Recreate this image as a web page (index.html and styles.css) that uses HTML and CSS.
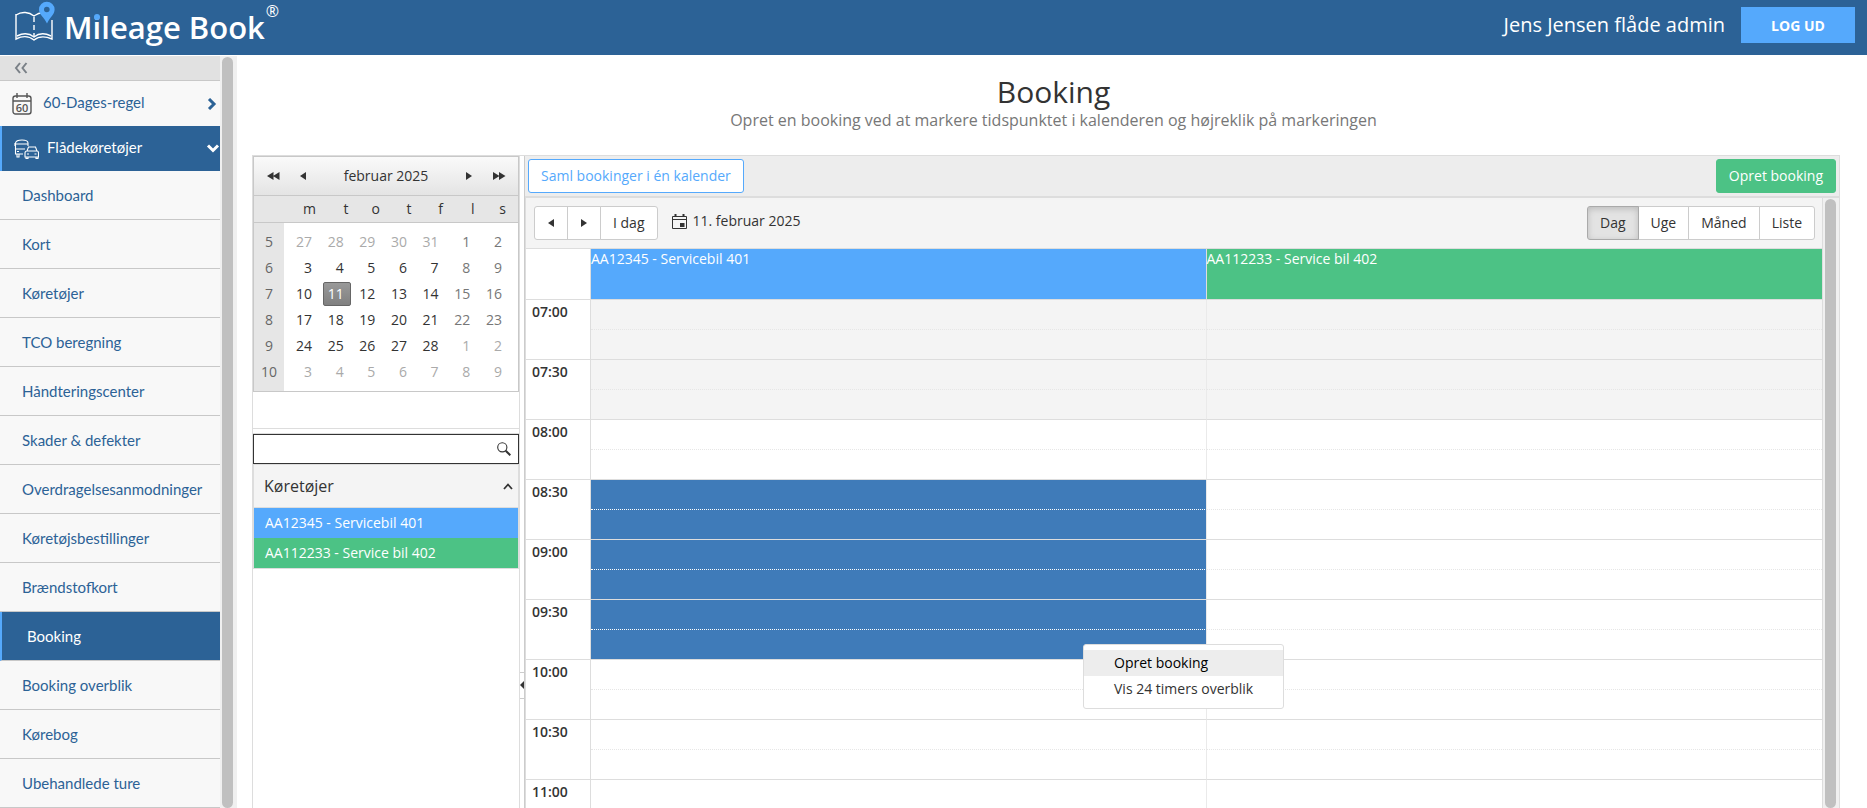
FILE: index.html
```html
<!DOCTYPE html>
<html lang="da">
<head>
<meta charset="utf-8">
<title>Mileage Book - Booking</title>
<link rel="stylesheet" href="styles.css">
</head>
<body>
<div class="app">
  <header class="topbar">
    <a class="logo" href="#">
      <svg class="logo-icon" viewBox="0 0 42 44" width="42" height="44" fill="none" aria-hidden="true">
        <path d="M2 14v25c6-3 13-3 18 1 5-4 11-4 18-1V20" stroke="#fff" stroke-width="1.4"/>
        <path d="M2 15c6-4 13-3 18 1 2-1 4-3 7-3M3 36c6-3 12-3 17 1 5-4 11-4 17-1" stroke="#fff" stroke-width="1.4"/>
        <path d="M20 17v19" stroke="#fff" stroke-width="1.4" stroke-dasharray="5 3"/>
        <path d="M33 23.500C30 17 25 14.500 25 9.500a7.800 7.800 0 0 1 15.600 0C40.600 14.500 36 17 33 23.500Z" fill="#55a9fc"/>
        <circle cx="32.800" cy="9.500" r="2.800" fill="#2c6296"/>
      </svg>
      <span class="logo-name">M<span class="logo-i">i</span>leage Book</span><span class="logo-mark">®</span>
    </a>
    <div class="user">
      <span>Jens Jensen flåde admin</span>
      <button class="logout" type="button">LOG UD</button>
    </div>
  </header>

  <div class="body">
    <nav class="sidebar">
      <div class="menu">
        <button class="collapse" type="button" aria-label="Skjul menu">
          <svg width="14" height="12" viewBox="0 0 14 12" fill="none" stroke="#7a8087" stroke-width="2" aria-hidden="true"><path d="M6 1 2 6l4 5M12.500 1l-4 5 4 5"/></svg>
        </button>
        <a class="group" href="#">
          <svg width="20" height="22" viewBox="0 0 20 22" aria-hidden="true">
            <rect x="1" y="3" width="18" height="18" rx="2.500" fill="none" stroke="#555" stroke-width="1.400"/>
            <path d="M1 8h18M5 0v5M15 0v5" stroke="#555" stroke-width="1.400"/>
            <text class="icon-digits" x="10" y="18.500" text-anchor="middle">60</text>
          </svg>
          <span class="group-name">60-Dages-regel</span>
          <svg width="10" height="12" viewBox="0 0 10 12" fill="none" stroke="#2c6296" stroke-width="3" aria-hidden="true"><path d="m2 1 5 5-5 5"/></svg>
        </a>
        <a class="group open" href="#">
          <svg width="25" height="20" viewBox="0 0 25 20" fill="none" stroke="#fff" stroke-width="1.100" aria-hidden="true">
            <path d="M9 15H1.500V4Q2 1 8 1t6 3v3M2 5h12M2 10h9M0 4v3M3 15v3h2v-3M3 12.500h2"/>
            <path d="M11 18v-4q0-2 2-2l1.500-4h7l1.500 4q1.500 0 1.500 2v4ZM13 12h10M12 18v1.500h2V18M22 18v1.500h2V18M13 15h2M20.500 15h2"/>
          </svg>
          <span class="group-name">Flådekøretøjer</span>
          <svg width="14" height="10" viewBox="0 0 14 10" fill="none" stroke="#fff" stroke-width="3" aria-hidden="true"><path d="m2 1.500 5 5 5-5"/></svg>
        </a>
        <a class="item" href="#">Dashboard</a>
        <a class="item" href="#">Kort</a>
        <a class="item" href="#">Køretøjer</a>
        <a class="item" href="#">TCO beregning</a>
        <a class="item" href="#">Håndteringscenter</a>
        <a class="item" href="#">Skader &amp; defekter</a>
        <a class="item" href="#">Overdragelsesanmodninger</a>
        <a class="item" href="#">Køretøjsbestillinger</a>
        <a class="item" href="#">Brændstofkort</a>
        <a class="item current" href="#">Booking</a>
        <a class="item" href="#">Booking overblik</a>
        <a class="item" href="#">Kørebog</a>
        <a class="item" href="#">Ubehandlede ture</a>
      </div>
      <div class="scrollbar"><div class="thumb"></div></div>
    </nav>

    <main class="main">
      <h1 class="title">Booking</h1>
      <p class="subtitle">Opret en booking ved at markere tidspunktet i kalenderen og højreklik på markeringen</p>

      <div class="workspace">
        <aside class="left">
          <div class="calendar-pane">
            <div class="calendar">
              <div class="calendar-head">
                <button type="button" aria-label="Forrige år"><svg width="13" height="8" viewBox="0 0 13 8" aria-hidden="true"><path d="M6.500 0v8L0 4ZM12.500 0v8L6 4Z"/></svg></button>
                <button type="button" aria-label="Forrige måned"><svg width="6" height="8" viewBox="0 0 6 8" aria-hidden="true"><path d="M6 0v8L0 4Z"/></svg></button>
                <span class="month">februar 2025</span>
                <button type="button" aria-label="Næste måned"><svg width="6" height="8" viewBox="0 0 6 8" aria-hidden="true"><path d="M0 0v8l6-4Z"/></svg></button>
                <button type="button" aria-label="Næste år"><svg width="13" height="8" viewBox="0 0 13 8" aria-hidden="true"><path d="M0 0v8l6.500-4ZM6 0v8l6.500-4Z"/></svg></button>
              </div>
              <table class="weekdays">
                <tr><th class="week"></th><th class="first">m</th><th>t</th><th>o</th><th>t</th><th>f</th><th>l</th><th>s</th></tr>
              </table>
              <div class="days-wrap">
              <table class="days">
                <tr><th class="week">5</th><td class="first other">27</td><td class="other">28</td><td class="other">29</td><td class="other">30</td><td class="other">31</td><td class="weekend">1</td><td class="weekend">2</td></tr>
                <tr><th class="week">6</th><td class="first">3</td><td>4</td><td>5</td><td>6</td><td>7</td><td class="weekend">8</td><td class="weekend">9</td></tr>
                <tr><th class="week">7</th><td class="first">10</td><td class="chosen"><span>11</span></td><td>12</td><td>13</td><td>14</td><td class="weekend">15</td><td class="weekend">16</td></tr>
                <tr><th class="week">8</th><td class="first">17</td><td>18</td><td>19</td><td>20</td><td>21</td><td class="weekend">22</td><td class="weekend">23</td></tr>
                <tr><th class="week">9</th><td class="first">24</td><td>25</td><td>26</td><td>27</td><td>28</td><td class="other">1</td><td class="other">2</td></tr>
                <tr><th class="week">10</th><td class="first other">3</td><td class="other">4</td><td class="other">5</td><td class="other">6</td><td class="other">7</td><td class="other">8</td><td class="other">9</td></tr>
              </table>
              </div>
            </div>
          </div>
          <div class="vehicles-pane">
            <div class="search">
              <input type="text" aria-label="Søg køretøj">
              <svg width="14" height="14" viewBox="0 0 14 14" fill="none" aria-hidden="true"><circle cx="5.300" cy="5.300" r="4.600" stroke="#333" stroke-width="1.100"/><path d="m8.700 8.700 4.600 4.600" stroke="#333" stroke-width="2"/></svg>
            </div>
            <div class="vehicles">
              <div class="vehicles-head">Køretøjer
                <svg width="10" height="7" viewBox="0 0 10 7" fill="none" stroke="#333" stroke-width="1.800" aria-hidden="true"><path d="m1 6 4-4.500L9 6"/></svg>
              </div>
              <div class="vehicle blue">AA12345 - Servicebil 401</div>
              <div class="vehicle green">AA112233 - Service bil 402</div>
            </div>
          </div>
        </aside>

        <div class="splitter">
          <button type="button" aria-label="Skjul panel"><svg width="4" height="8" viewBox="0 0 4 8" aria-hidden="true"><path d="M4 0v8L0 4Z"/></svg></button>
        </div>

        <section class="right">
          <div class="actions">
            <button class="btn outline" type="button">Saml bookinger i én kalender</button>
            <button class="btn create" type="button">Opret booking</button>
          </div>
          <div class="scroller">
            <div class="scheduler">
              <div class="tools">
                <div class="buttons">
                  <button class="arrow" type="button" aria-label="Forrige"><svg width="6" height="8" viewBox="0 0 6 8" aria-hidden="true"><path d="M6 0v8L0 4Z"/></svg></button>
                  <button class="arrow" type="button" aria-label="Næste"><svg width="6" height="8" viewBox="0 0 6 8" aria-hidden="true"><path d="M0 0v8l6-4Z"/></svg></button>
                  <button type="button">I dag</button>
                </div>
                <a class="date" href="#">
                  <svg width="15" height="15" viewBox="0 0 15 15" fill="none" stroke="#333" aria-hidden="true"><path d="M.500 2.500h14v12H.500ZM.500 5.500h14"/><path d="M3.500 0v3M11.500 0v3" stroke-width="2"/><path d="M8 9h4.500v4H8Z" fill="#333" stroke="none"/></svg>
                  11. februar 2025
                </a>
                <div class="buttons views">
                  <button class="active" type="button">Dag</button>
                  <button type="button">Uge</button>
                  <button type="button">Måned</button>
                  <button type="button">Liste</button>
                </div>
              </div>
              <table class="slots">
                <tr class="resources"><th class="time"></th><th class="blue">AA12345 - Servicebil 401</th><th class="green">AA112233 - Service bil 402</th></tr>
                <tr class="half off"><th class="time" rowspan="2">07:00</th><td></td><td></td></tr>
                <tr class="full off"><td></td><td></td></tr>
                <tr class="half off"><th class="time" rowspan="2">07:30</th><td></td><td></td></tr>
                <tr class="full off"><td></td><td></td></tr>
                <tr class="half"><th class="time" rowspan="2">08:00</th><td></td><td></td></tr>
                <tr class="full"><td></td><td></td></tr>
                <tr class="half"><th class="time" rowspan="2">08:30</th><td class="picked"></td><td></td></tr>
                <tr class="full"><td class="picked"></td><td></td></tr>
                <tr class="half"><th class="time" rowspan="2">09:00</th><td class="picked"></td><td></td></tr>
                <tr class="full"><td class="picked"></td><td></td></tr>
                <tr class="half"><th class="time" rowspan="2">09:30</th><td class="picked"></td><td></td></tr>
                <tr class="full"><td class="picked"></td><td></td></tr>
                <tr class="half"><th class="time" rowspan="2">10:00</th><td></td><td></td></tr>
                <tr class="full"><td></td><td></td></tr>
                <tr class="half"><th class="time" rowspan="2">10:30</th><td></td><td></td></tr>
                <tr class="full"><td></td><td></td></tr>
                <tr class="half"><th class="time" rowspan="2">11:00</th><td></td><td></td></tr>
                <tr class="full"><td></td><td></td></tr>
              </table>
            </div>
            <div class="scrollbar"><div class="thumb"></div></div>
          </div>
        </section>
      </div>
    </main>
  </div>

  <div class="context-menu" role="menu">
    <button class="hover" type="button" role="menuitem">Opret booking</button>
    <button type="button" role="menuitem">Vis 24 timers overblik</button>
  </div>
</div>
</body>
</html>
```
FILE: styles.css
```css
* { box-sizing: border-box; }

body {
  margin: 0;
  font: 14px/20px "Open Sans", "Noto Sans", sans-serif;
  color: #333;
  background: #fff;
}

button, input { font: inherit; color: inherit; }
button { cursor: pointer; }
a { text-decoration: none; color: inherit; }
svg { display: block; flex: none; }

table { border-collapse: separate; border-spacing: 0; table-layout: fixed; }
th, td { padding: 0; font-weight: 400; }

.app {
  height: 100vh;
  display: flex;
  flex-direction: column;
  overflow: hidden;
  position: relative;
}

/* Top bar */
.topbar {
  flex: none;
  height: 55px;
  padding-right: 12px;
  padding-left: 14px;
  display: flex;
  justify-content: space-between;
  background: #2c6296;
  color: #fff;
}
.logo { display: flex; gap: 8px; }
.logo-name {
  font: 600 31px/54px "Open Sans", sans-serif;
}
.logo-i { position: relative; }
.logo-i::after {
  content: "";
  position: absolute;
  left: 1px;
  top: 8px;
  width: 6px;
  height: 6px;
  border-radius: 50%;
  background: #55a9fc;
}
.logo-mark { margin-left: -7px; font: 16px/22px "Open Sans", sans-serif; }
.user {
  display: flex;
  gap: 16px;
  padding-top: 7px;
  font-size: 20px;
  line-height: 36px;
}
.logout {
  width: 114px;
  height: 36px;
  border: 0;
  background: #55a9fc;
  color: #fff;
  font: 700 14px/36px "Open Sans", sans-serif;
}

.body { flex: 1; min-height: 0; display: flex; }

/* Side menu */
.sidebar { flex: none; display: flex; overflow: hidden; padding-top: 1px; }
.menu {
  width: 220px;
  background: #f8f8f8;
  font-family: Lato, sans-serif;
  font-size: 15px;
  color: #2c6296;
}
.collapse {
  display: flex;
  align-items: center;
  width: 100%;
  height: 25px;
  padding: 0 14px;
  border: 0;
  border-bottom: 1px solid #c8c8c8;
  background: #e1e1e1;
}
.group {
  display: flex;
  align-items: center;
  gap: 11px;
  height: 45px;
  padding: 0 3px 0 12px;
}
.group.open {
  gap: 8px;
  padding: 0 0 0 12px;
  border-left: 2px solid #55a9fc;
  background: #2c6296;
  color: #fff;
}
.group-name { flex: 1; padding-bottom: 4px; }
.icon-digits { font: 600 11px "Open Sans", sans-serif; fill: #555; }
.item {
  display: block;
  height: 49px;
  padding: 0 22px;
  border-bottom: 1px solid #c8c8c8;
  line-height: 48px;
  white-space: nowrap;
}
.item.current {
  padding-left: 25px;
  border-left: 2px solid #55a9fc;
  background: #2c6296;
  color: #fff;
}
.scrollbar { flex: none; width: 17px; padding: 1px 4px 0 2px; background: #f0f0f0; }
.thumb { height: 100%; border-radius: 6px; background: #c0c0c0; }

/* Page */
.main {
  flex: 1;
  min-width: 0;
  display: flex;
  flex-direction: column;
  padding: 18px 27px 0 15px;
}
.title { margin: 0; padding-left: 15px; font-size: 30px; line-height: 38px; font-weight: 400; text-align: center; }
.subtitle { margin: 0 0 26px; padding-left: 15px; font-size: 16px; line-height: 18px; text-align: center; color: #777; }

.workspace {
  flex: 1;
  min-height: 0;
  display: flex;
  border: 1px solid #ddd;
  border-bottom: 0;
}
.left {
  flex: none;
  width: 267px;
  display: flex;
  flex-direction: column;
  border-right: 1px solid #ddd;
}
.calendar-pane { height: 273px; border-bottom: 1px solid #ddd; }

.calendar { border: 1px solid #c8c8c8; }
.calendar-head {
  display: flex;
  align-items: center;
  height: 39px;
  padding: 0 4px;
  border-bottom: 1px solid #c8c8c8;
  background: linear-gradient(#fafafa, #e4e4e4);
}
.calendar-head button {
  display: flex;
  justify-content: center;
  align-items: center;
  width: 30px;
  height: 30px;
  padding: 0;
  border: 0;
  background: none;
  fill: #333;
}
.month { flex: 1; text-align: center; }
.weekdays {
  width: 100%;
  padding-right: 11px;
  border-bottom: 1px solid #c8c8c8;
  background: #e6e6e6;
}
.weekdays th { height: 26px; padding-right: 1px; text-align: right; }
.weekdays .first { width: 34px; padding-right: 2px; }
.calendar .week { width: 30px; padding: 0; text-align: center; color: #666; background: #e6e6e6; }
.days-wrap { padding: 0 9px 0 0; background: linear-gradient(to right, #e6e6e6 30px, #fff 30px); }
.days { width: 100%; padding: 6px 0; }
.days td { height: 26px; padding: 0 7px 0 0; text-align: right; }
.days .first { width: 35px; }
.days .other { color: #aaa; }
.days .weekend { color: #777; }
.days .chosen { padding: 1px 0 1px 4px; }
.days .chosen span {
  display: block;
  padding: 0 6px 0 0;
  border: 1px solid #666;
  border-radius: 2px;
  background: linear-gradient(#999, #808080);
  color: #fff;
  line-height: 22px;
}

.vehicles-pane { margin-top: 4px; border-top: 1px solid #ddd; }
.search {
  display: flex;
  align-items: center;
  height: 30px;
  padding-right: 7px;
  border: 1px solid #333;
}
.search input { flex: 1; min-width: 0; height: 28px; border: 0; padding: 0 8px; outline: none; background: none; }
.vehicles { border: 1px solid #ddd; }
.vehicles-head {
  display: flex;
  align-items: center;
  justify-content: space-between;
  height: 43px;
  padding: 0 5px 0 10px;
  border-bottom: 1px solid #ddd;
  background: #f4f4f4;
  font-size: 16px;
}
.vehicle { padding: 0 11px; line-height: 30px; color: #fff; }
.blue { background: #55a9fc; }
.green { background: #4cc285; }

.splitter {
  flex: none;
  width: 4px;
  display: flex;
  flex-direction: column;
  justify-content: center;
  padding-top: 406px;
}
.splitter button {
  display: flex;
  align-items: center;
  height: 27px;
  padding: 0;
  border: solid #ccc;
  border-width: 1px 0;
  background: #fff;
  fill: #333;
}

/* Scheduler */
.right { flex: 1; min-width: 0; display: flex; flex-direction: column; border-left: 1px solid #ccc; }
.actions {
  flex: none;
  display: flex;
  justify-content: space-between;
  height: 42px;
  padding: 3px;
  border-bottom: 2px solid #ddd;
  background: #ededed;
}
.btn { height: 34px; padding: 0 12px; border: 1px solid #55a9fc; border-radius: 3px; }
.outline { background: #fff; color: #55a9fc; }
.create { border-color: #4cc285; background: #4cc285; color: #fff; }

.scroller { flex: 1; min-height: 0; display: flex; overflow: hidden; }
.scroller .scrollbar { width: 16px; padding-right: 3px; }
.scheduler { flex: 1; min-width: 0; border: solid #ddd; border-width: 0 1px; }
.tools {
  display: flex;
  height: 51px;
  padding: 8px 7px 8px 8px;
  border-bottom: 1px solid #ddd;
  background: #f4f4f4;
}
.buttons { display: flex; height: 34px; }
.buttons button {
  margin-left: -1px;
  padding: 0 12px;
  border: 1px solid #ccc;
  background: #fff;
}
.buttons button:first-child { margin-left: 0; border-radius: 3px 0 0 3px; }
.buttons button:last-child { border-radius: 0 3px 3px 0; }
.buttons .arrow { display: flex; justify-content: center; align-items: center; width: 34px; fill: #333; }
.buttons .active {
  border-color: #aaa;
  background: #e3e3e3;
  box-shadow: inset 0 2px 6px #bbb;
  z-index: 1;
}
.date { display: flex; align-items: center; gap: 6px; height: 30px; margin-left: 14px; }
.views { margin-left: auto; }

.slots { width: 100%; }
.slots .time {
  width: 65px;
  padding: 2px 6px;
  border: solid #ddd;
  border-width: 0 1px 1px 0;
  text-align: left;
  vertical-align: top;
  font-weight: 600;
}
.resources th { height: 51px; border-bottom: 1px solid #ddd; text-align: left; vertical-align: top; color: #fff; }
.resources .blue { border-right: 1px solid #ddd; }
.slots td { height: 30px; border-right: 1px solid #eaeaea; }
.slots td:last-child { border-right: 0; }
.half td { border-bottom: 1px dotted #e6e6e6; }
.full td { border-bottom: 1px solid #ddd; }
.off td { background: #f4f4f4; }
.slots .picked { background: #3f7bb9; }
.half .picked { border-bottom-color: #fff; }

/* Context menu */
.context-menu {
  position: absolute;
  left: 1083px;
  top: 644px;
  width: 201px;
  padding: 5px 0 6px;
  border: 1px solid #ddd;
  border-radius: 3px;
  background: #fff;
}
.context-menu button {
  display: block;
  width: 100%;
  height: 26px;
  padding: 0 30px;
  border: 0;
  background: none;
  text-align: left;
  white-space: nowrap;
}
.context-menu .hover { background: #ededed; color: #000; }
```
